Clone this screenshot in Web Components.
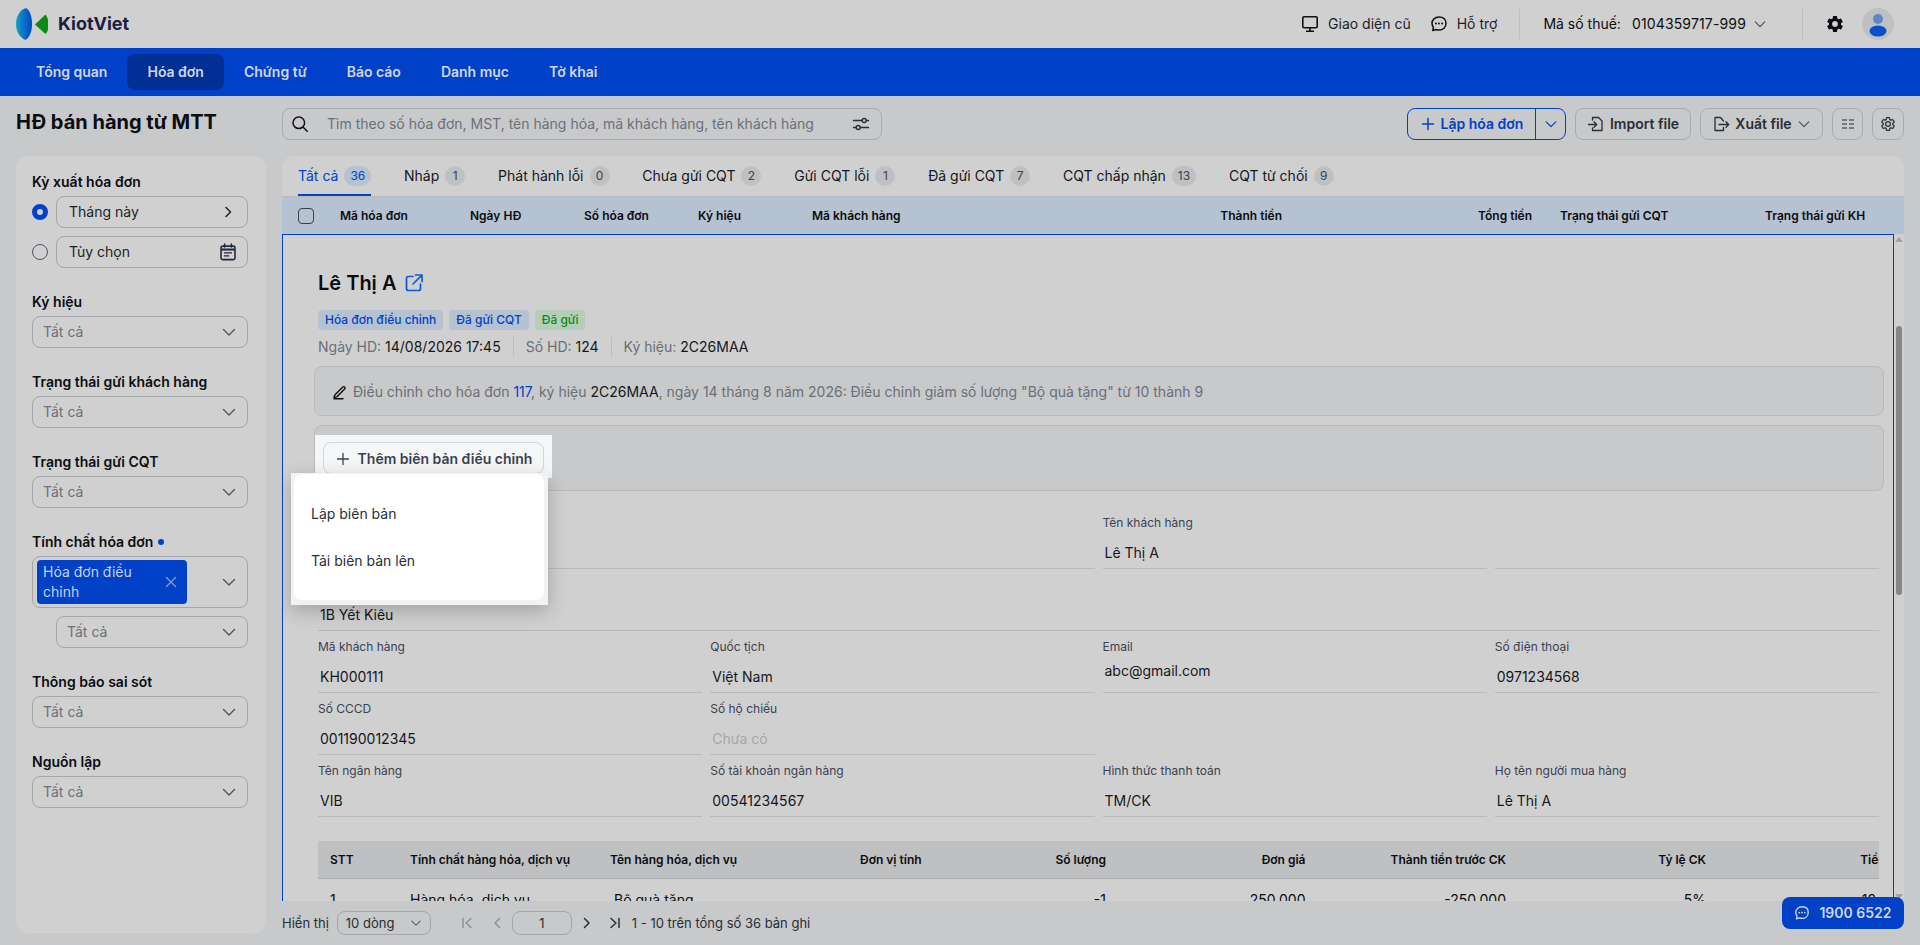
<!DOCTYPE html>
<html lang="vi">
<head>
<meta charset="utf-8">
<title>HĐ bán hàng từ MTT</title>
<style>
	html, body { margin: 0; height: 100%; }
	body {
		width: 1920px;
		height: 945px;
		overflow: hidden;
		display: flex;
		flex-direction: column;
		background: #c8c9cb;
		color: #0c0d10;
		font: 14px/20px Inter, "Noto Sans", sans-serif;
	}
</style>
</head>
<body>
<kv-header></kv-header>
<kv-nav>
	<kv-nav-item>Tổng quan</kv-nav-item>
	<kv-nav-item active>Hóa đơn</kv-nav-item>
	<kv-nav-item>Chứng từ</kv-nav-item>
	<kv-nav-item>Báo cáo</kv-nav-item>
	<kv-nav-item>Danh mục</kv-nav-item>
	<kv-nav-item>Tờ khai</kv-nav-item>
</kv-nav>
<kv-page>
	<kv-toolbar slot="toolbar"></kv-toolbar>
	<kv-sidebar slot="side">
		<kv-filter label="Kỳ xuất hóa đơn">
			<kv-option checked><kv-select dark text="Tháng này" icon="right"></kv-select></kv-option>
			<kv-option><kv-select dark text="Tùy chọn" icon="calendar"></kv-select></kv-option>
		</kv-filter>
		<kv-filter label="Ký hiệu"><kv-select text="Tất cả"></kv-select></kv-filter>
		<kv-filter label="Trạng thái gửi khách hàng"><kv-select text="Tất cả"></kv-select></kv-filter>
		<kv-filter label="Trạng thái gửi CQT"><kv-select text="Tất cả"></kv-select></kv-filter>
		<kv-filter label="Tính chất hóa đơn" dot>
			<kv-select><kv-chip>Hóa đơn điều chỉnh</kv-chip></kv-select>
			<kv-select indent text="Tất cả"></kv-select>
		</kv-filter>
		<kv-filter label="Thông báo sai sót"><kv-select text="Tất cả"></kv-select></kv-filter>
		<kv-filter label="Nguồn lập"><kv-select text="Tất cả"></kv-select></kv-filter>
	</kv-sidebar>
	<kv-panel slot="main">
		<kv-tabs slot="tabs">
			<kv-tab active count="36">Tất cả</kv-tab>
			<kv-tab count="1">Nháp</kv-tab>
			<kv-tab count="0">Phát hành lỗi</kv-tab>
			<kv-tab count="2">Chưa gửi CQT</kv-tab>
			<kv-tab count="1">Gửi CQT lỗi</kv-tab>
			<kv-tab count="7">Đã gửi CQT</kv-tab>
			<kv-tab count="13">CQT chấp nhận</kv-tab>
			<kv-tab count="9">CQT từ chối</kv-tab>
		</kv-tabs>
		<kv-table-head slot="head"></kv-table-head>
		<kv-detail slot="detail"></kv-detail>
	</kv-panel>
	<kv-pager slot="pager"></kv-pager>
</kv-page>
<kv-hotline></kv-hotline>

<script>
	const chevronDown = (size = 16, color = '#4b5563') => `<svg width="${size}" height="${size}" viewBox="0 0 16 16" fill="none" stroke="${color}" stroke-width="1.4" stroke-linecap="round" stroke-linejoin="round"><path d="M2.5 5.5 8 11l5.5-5.5"/></svg>`
	const chevronRight = (color = '#1f2937') => `<svg width="16" height="16" viewBox="0 0 16 16" fill="none" stroke="${color}" stroke-width="1.6" stroke-linecap="round" stroke-linejoin="round"><path d="M5 3.500 9.500 8 5 12.500"/></svg>`
	const calendar = `<svg width="18" height="18" viewBox="0 0 16 16" fill="none" stroke="#1f2937" stroke-width="1.4"><rect x="1.800" y="2.800" width="12.400" height="12" rx="1.500"/><path d="M1.800 5.800h12.400" stroke-width="1.800"/><path d="M5 1v2.500M11 1v2.500" stroke-linecap="round"/><path d="M4.500 8.800h7M4.500 11.500h4.500" stroke-width="1.200"/></svg>`
	const gearPath = 'M19.14 12.94c.04-.3.06-.61.06-.94 0-.32-.02-.64-.07-.94l2.03-1.58c.18-.14.23-.41.12-.61l-1.92-3.32c-.12-.22-.37-.29-.59-.22l-2.39.96c-.5-.38-1.03-.7-1.62-.94l-.36-2.54c-.04-.24-.24-.41-.48-.41h-3.84c-.24 0-.43.17-.47.41l-.36 2.54c-.59.24-1.13.57-1.62.94l-2.39-.96c-.22-.08-.47 0-.59.22L2.74 8.87c-.12.21-.08.47.12.61l2.03 1.58c-.05.3-.09.63-.09.94s.02.64.07.94l-2.03 1.58c-.18.14-.23.41-.12.61l1.92 3.32c.12.22.37.29.59.22l2.39-.96c.5.38 1.03.7 1.62.94l.36 2.54c.05.24.24.41.48.41h3.84c.24 0 .44-.17.47-.41l.36-2.54c.59-.24 1.13-.56 1.62-.94l2.39.96c.22.08.47 0 .59-.22l1.92-3.32c.12-.22.07-.47-.12-.61l-2.01-1.58zM12 15.6c-1.98 0-3.6-1.62-3.6-3.6s1.62-3.6 3.6-3.6 3.6 1.62 3.6 3.6-1.62 3.6-3.6 3.6z'
	const chatBubble = (color, size = 18) => `<svg width="${size}" height="${size}" viewBox="0 0 18 18" fill="none" stroke="${color}" stroke-width="1.500" stroke-linejoin="round"><path d="M9 2C4.900 2 2 4.800 2 8.300c0 1.500.5 2.800 1.400 3.900L2.800 15.600l3.300-1.100c.9.4 1.900.6 2.900.6 4.100 0 7-2.900 7-6.800S13.100 2 9 2Z"/><g fill="${color}" stroke="none"><circle cx="5.900" cy="8.500" r="1"/><circle cx="9" cy="8.500" r="1"/><circle cx="12.100" cy="8.500" r="1"/></g></svg>`

	// every element renders its shadow root once, attributes are read at connect time
	function define(name, css, template) {
		customElements.define(name, class extends HTMLElement {
			connectedCallback() {
				if (this.shadowRoot) return
				this.attachShadow({ mode: 'open' })
				this.shadowRoot.innerHTML = `<style>${css}</style>${template(this)}`
			}
		})
	}

	define('kv-header', `
		:host { display: flex; align-items: center; height: 48px; flex: none; padding: 0 26px 0 16px; box-sizing: border-box; background: #d0d0d0; }
		.logo { display: flex; align-items: center; gap: 10px; font-size: 18px; line-height: 24px; font-weight: 700; color: #1a2140; }
		.links { margin-left: auto; display: flex; align-items: center; color: #1c1f26; }
		.link { display: flex; align-items: center; gap: 9px; }
		.link + .link { margin-left: 19px; }
		.sep { width: 1px; height: 30px; background: #bdbec0; }
		.tax { display: flex; align-items: center; margin: 0 35px 0 23px; }
		.tax b { font-weight: 400; margin-left: 11px; letter-spacing: .15px; }
		.tax svg { margin-left: 7px; }
		.gear { margin: 0 17px 0 22px; display: flex; }
		.avatar { width: 32px; height: 32px; border-radius: 50%; background: #bfc0c2; overflow: hidden; }
	`, () => `
		<div class="logo">
			<svg width="32" height="32" viewBox="0 0 32 32">
				<defs><linearGradient id="lg" x1="0" x2="1" y1="0" y2="0"><stop offset="0" stop-color="#12a0c8"/><stop offset="1" stop-color="#0045c4"/></linearGradient></defs>
				<path fill="url(#lg)" d="M10 0C3.500 2 0 9 0 16c0 7.500 3.800 13.500 9.500 16 3.900-2 6.500-8.500 6.500-16S13.800 2 10 0Z"/>
				<path fill="#0a8c14" d="M19 16.500 29.500 6.500c2.400 3 3.100 6.500 3.100 10s-.7 7-3.100 9.500Z"/>
			</svg>
			KiotViet
		</div>
		<div class="links">
			<div class="link">
				<svg width="18" height="18" viewBox="0 0 18 18" fill="none" stroke="#111" stroke-width="1.600"><rect x="1.800" y="1.800" width="14.400" height="11" rx="1.200"/><path d="M9 13v3M5 16.200h8"/></svg>
				Giao diện cũ
			</div>
			<div class="link">${chatBubble('#111')}Hỗ trợ</div>
		</div>
		<div class="sep" style="margin-left:22px"></div>
		<div class="tax">Mã số thuế:<b>0104359717-999</b>${chevronDown(14)}</div>
		<div class="sep"></div>
		<div class="gear"><svg width="20" height="20" viewBox="0 0 24 24" fill="#0c0d10"><path d="${gearPath}"/></svg></div>
		<div class="avatar"><svg width="32" height="32" viewBox="0 0 32 32"><circle cx="16" cy="11" r="5" fill="#5f86c9"/><ellipse cx="16" cy="23" rx="8.500" ry="5.500" fill="#0a50cc"/></svg></div>
	`)

	define('kv-nav', `
		:host { display: flex; align-items: center; height: 48px; flex: none; padding-left: 16px; background: #0041c7; }
	`, () => `<slot></slot>`)

	define('kv-nav-item', `
		:host { display: flex; align-items: center; height: 36px; padding: 0 20px; border-radius: 8px; color: #cfd5e4; font-weight: 600; }
		:host([active]) { background: #002f96; }
	`, () => `<slot></slot>`)

	define('kv-page', `
		:host { flex: 1; min-height: 0; display: grid; grid-template-columns: 250px 1622px; grid-template-rows: 32px 1fr; column-gap: 16px; row-gap: 16px; padding: 12px 16px 0; }
		h1 { margin: 0; font-size: 20px; line-height: 28px; font-weight: 700; }
		.side { min-height: 0; padding-bottom: 12px; display: flex; }
		.main { min-height: 0; display: flex; flex-direction: column; }
	`, () => `
		<h1>HĐ bán hàng từ MTT</h1>
		<slot name="toolbar"></slot>
		<div class="side"><slot name="side"></slot></div>
		<div class="main"><slot name="main"></slot><slot name="pager"></slot></div>
	`)

	define('kv-toolbar', `
		:host { display: flex; align-items: stretch; gap: 9px; color: #2a2d34; font-weight: 600; }
		.search { width: 600px; box-sizing: border-box; display: flex; align-items: center; gap: 18px; padding: 0 10px 0 8px; margin-right: auto; border: 1px solid #a9aaad; border-radius: 8px; color: #6b7079; font-weight: 400; }
		.search span { flex: 1; }
		.btn { display: flex; align-items: center; justify-content: center; gap: 5px; box-sizing: border-box; border: 1px solid #a9aaad; border-radius: 8px; }
		.create { width: 159px; gap: 0; border-color: #0041c7; color: #0041c7; }
		.create .main { flex: 1; display: flex; align-items: center; justify-content: center; gap: 5px; height: 100%; border-right: 1px solid #0041c7; }
		.create .drop { width: 29px; display: flex; align-items: center; justify-content: center; }
	`, () => `
		<div class="search">
			<svg width="18" height="18" viewBox="0 0 18 18" fill="none" stroke="#111" stroke-width="1.500" stroke-linecap="round"><circle cx="7.800" cy="7.800" r="5.800"/><path d="m12.200 12.200 4 4"/></svg>
			<span>Tìm theo số hóa đơn, MST, tên hàng hóa, mã khách hàng, tên khách hàng</span>
			<svg width="20" height="20" viewBox="0 0 20 20" fill="none" stroke="#2a2d34" stroke-width="1.400" stroke-linecap="round"><path d="M2.500 6.500h8.500M15.500 6.500H17.500M2.500 13.500H5M9.500 13.500h8"/><circle cx="13.200" cy="6.500" r="2"/><circle cx="7.200" cy="13.500" r="2"/></svg>
		</div>
		<div class="btn create">
			<div class="main">
				<svg width="16" height="16" viewBox="0 0 16 16" fill="none" stroke="#0041c7" stroke-width="1.500" stroke-linecap="round"><path d="M8 2.500v11M2.500 8h11"/></svg>
				Lập hóa đơn
			</div>
			<div class="drop">${chevronDown(14, '#0041c7')}</div>
		</div>
		<div class="btn" style="width:116px">
			<svg width="18" height="18" viewBox="0 0 18 18" fill="none" stroke="#2a2d34" stroke-width="1.300" stroke-linecap="round" stroke-linejoin="round"><path d="M5.500 5V2.500h6l3.500 3.500v9.500H5.500V13"/><path d="M1.500 9.500h8M7 6.800l2.700 2.700L7 12.200"/></svg>
			Import file
		</div>
		<div class="btn" style="width:123px">
			<svg width="18" height="18" viewBox="0 0 18 18" fill="none" stroke="#2a2d34" stroke-width="1.300" stroke-linecap="round" stroke-linejoin="round"><path d="M11.500 6 8.500 2.500H3v13h8.500V12.500"/><path d="M7 9.500h9.500M14 6.800l2.700 2.700L14 12.200"/></svg>
			Xuất file ${chevronDown(14)}
		</div>
		<div class="btn" style="width:31px">
			<svg width="14" height="14" viewBox="0 0 14 14" fill="none" stroke="#2a2d34" stroke-width="1.200"><path d="M1 3h5M8 3h5M1 7h5M8 7h5M1 11h5M8 11h5"/></svg>
		</div>
		<div class="btn" style="width:32px">
			<svg width="16" height="16" viewBox="0 0 24 24" fill="none" stroke="#2a2d34" stroke-width="1.800"><path d="${gearPath}"/></svg>
		</div>
	`)

	define('kv-sidebar', `
		:host { display: flex; flex-direction: column; gap: 24px; flex: 1; box-sizing: border-box; padding: 16px 18px 16px 16px; background: #d0d0d0; border-radius: 12px; }
	`, () => `<slot></slot>`)

	define('kv-filter', `
		:host { display: flex; flex-direction: column; gap: 8px; }
		.label { font-weight: 600; margin-bottom: -4px; color: #0c0d10; display: flex; align-items: center; gap: 5px; }
		.dot { width: 6px; height: 6px; border-radius: 50%; background: #0041c7; }
	`, el => `
		<div class="label">${el.getAttribute('label')}${el.hasAttribute('dot') ? '<span class="dot"></span>' : ''}</div>
		<slot></slot>
	`)

	define('kv-option', `
		:host { display: flex; align-items: center; gap: 8px; }
		.radio { width: 16px; height: 16px; flex: none; box-sizing: border-box; border-radius: 50%; border: 1px solid #4b5563; }
		:host([checked]) .radio { border: 5px solid #0041c7; background: #d0d0d0; }
		::slotted(kv-select) { flex: 1; }
	`, () => `<span class="radio"></span><slot></slot>`)

	define('kv-select', `
		:host { display: flex; align-items: center; box-sizing: border-box; min-height: 32px; padding: 3px 10px 3px 4px; border: 1px solid #a5a6a9; border-radius: 8px; color: #6b7079; }
		:host([dark]) { color: #1c1f26; padding-left: 12px; }
		:host([indent]) { margin-left: 24px; }
		.text { flex: 1; padding-left: 6px; }
		:host([dark]) .text { padding-left: 0; }
		.text:empty { display: none; }
		slot { display: block; flex: 1; }
		.icon { display: flex; margin-left: auto; }
	`, el => {
		const icon = el.getAttribute('icon')
		const glyph = icon === 'right' ? chevronRight() : icon === 'calendar' ? calendar : chevronDown()
		return `<div class="text">${el.getAttribute('text') || ''}</div><slot></slot><div class="icon">${glyph}</div>`
	})

	define('kv-chip', `
		:host { display: flex; align-items: center; width: 150px; box-sizing: border-box; padding: 2px 10px 2px 6px; background: #0041c7; border-radius: 4px; color: #c5d1ea; }
		span { width: 108px; }
		svg { margin-left: auto; }
	`, () => `<span><slot></slot></span><svg width="12" height="12" viewBox="0 0 12 12" fill="none" stroke="#7f9fdc" stroke-width="1.300" stroke-linecap="round"><path d="m1.500 1.500 9 9M10.500 1.500l-9 9"/></svg>`)

	define('kv-panel', `
		:host { flex: 1; min-height: 0; display: flex; flex-direction: column; background: #d0d0d0; border-radius: 12px 12px 0 0; overflow: hidden; }
		.body { flex: 1; min-height: 0; display: flex; }
		.track { width: 10px; flex: none; display: flex; flex-direction: column; align-items: center; }
		.up, .down { width: 0; height: 0; border-left: 4px solid transparent; border-right: 4px solid transparent; }
		.up { border-bottom: 5px solid #a0a1a3; margin-top: 3px; }
		.down { border-top: 5px solid #a0a1a3; margin-top: auto; margin-bottom: 2px; }
		.thumb { width: 6px; height: 269px; margin-top: 84px; background: #858688; border-radius: 3px; }
	`, () => `
		<slot name="tabs"></slot>
		<slot name="head"></slot>
		<div class="body">
			<slot name="detail"></slot>
			<div class="track"><span class="up"></span><span class="thumb"></span><span class="down"></span></div>
		</div>
	`)

	define('kv-tabs', `
		:host { display: flex; gap: 32.8px; height: 41px; box-sizing: border-box; padding-left: 16px; border-bottom: 1px solid #b9babc; flex: none; }
	`, () => `<slot></slot>`)

	define('kv-tab', `
		:host { display: flex; align-items: center; gap: 6px; height: 40px; box-sizing: border-box; color: #15171c; }
		:host([active]) { color: #0041c7; border-bottom: 2px solid #0041c7; padding-top: 2px; }
		.count { min-width: 20px; height: 20px; box-sizing: border-box; padding: 0 6px; border-radius: 10px; background: #bfc0c2; color: #3b3f46; font-size: 12px; line-height: 20px; text-align: center; }
		:host([active]) .count { background: #b5c2d1; color: #0041c7; }
	`, el => `<slot></slot><span class="count">${el.getAttribute('count')}</span>`)

	define('kv-table-head', `
		:host { display: grid; grid-template-columns: 58px 130px 114px 114px 114px 288px 182px 250px 233px 139px; align-items: center; height: 37px; flex: none; background: #b5c2d1; font-size: 12px; font-weight: 600; color: #0c0d10; }
		.check { padding-left: 16px; display: flex; }
		.check i { width: 16px; height: 16px; box-sizing: border-box; border: 1px solid #3b3f46; border-radius: 4px; }
		.end { text-align: right; }
		.pad { padding-left: 28px; }
	`, () => `
		<div class="check"><i></i></div>
		<div>Mã hóa đơn</div><div>Ngày HĐ</div><div>Số hóa đơn</div><div>Ký hiệu</div><div>Mã khách hàng</div>
		<div class="end">Thành tiền</div><div class="end">Tổng tiền</div>
		<div class="pad">Trạng thái gửi CQT</div><div>Trạng thái gửi KH</div>
	`)

	define('kv-detail', `
		:host { display: block; flex: 1; min-width: 0; overflow: hidden; border: 1px solid #0041c7; border-bottom: 0; box-sizing: border-box; padding: 34px 9px 0 31px; position: relative; }
		.title { display: flex; align-items: center; gap: 8px; margin-left: 4px; font-size: 20px; line-height: 28px; font-weight: 600; }
		.tags { display: flex; gap: 6px; margin: 13px 0 0 4px; }
		.tag { height: 20px; padding: 0 7px; border-radius: 4px; background: #b5c2d1; color: #0041c7; font-size: 12px; font-weight: 500; }
		.tag.ok { background: #b5ceb9; color: #0a8c14; }
		.meta { display: flex; margin: 7px 0 0 4px; color: #6a6f77; }
		.meta b { font-weight: 400; color: #15171c; }
		.meta span + span { margin-left: 12px; padding-left: 12px; border-left: 1px solid #bdbec0; }
		.box { box-sizing: border-box; margin-top: 9px; background: #c8c9cb; border: 1px solid #b9babc; border-radius: 8px; }
		.note { height: 50px; display: flex; align-items: center; gap: 5px; padding: 2px 17px 0; color: #6a6f77; }
		.note b { font-weight: 400; color: #15171c; }
		.note a { color: #0041c7; }
		.adjust { height: 66px; padding-top: 9px; position: relative; }
		.spot { width: 237px; height: 43px; box-sizing: border-box; padding: 7px 8px 4px; background: #f5f6f8; }
		.add { display: flex; align-items: center; justify-content: center; gap: 7px; height: 32px; box-sizing: border-box; padding-top: 1px; border: 1px solid #d3d5da; border-radius: 8px; font-weight: 600; color: #3b4250; }
		.grid { display: grid; grid-template-columns: repeat(4, 1fr); column-gap: 8px; margin: 16px 5px 0 4px; }
		.wide2 { grid-column: span 2; }
		.wide4 { grid-column: span 4; }
		.items { margin: 24px 5px 0 4px; overflow: hidden; }
		.row { display: grid; grid-template-columns: 92px 200px 250px 100px 146px 199.5px 200.5px 200px 200px; width: 1588px; align-items: center; }
		.row.top { height: 37px; background: #bfc0c2; border-bottom: 1px solid #adaeb0; font-size: 12px; font-weight: 600; }
		.row.line { padding-top: 11px; }
		.row .first { padding-left: 12px; }
		.row .end { text-align: right; }
		.row .in { padding-left: 4px; }
	`, () => `
		<div class="title">Lê Thị A
			<svg width="20" height="20" viewBox="0 0 20 20" fill="none" stroke="#0d5ad6" stroke-width="1.700" stroke-linecap="round" stroke-linejoin="round"><path d="M9 3.500H4.500a2 2 0 0 0-2 2v10a2 2 0 0 0 2 2h10a2 2 0 0 0 2-2V11"/><path d="M11.500 2h6.500v6.500M18 2l-9 9"/></svg>
		</div>
		<div class="tags">
			<span class="tag">Hóa đơn điều chỉnh</span>
			<span class="tag">Đã gửi CQT</span>
			<span class="tag ok">Đã gửi</span>
		</div>
		<div class="meta">
			<span>Ngày HD: <b>14/08/2026 17:45</b></span>
			<span>Số HD: <b>124</b></span>
			<span>Ký hiệu: <b>2C26MAA</b></span>
		</div>
		<div class="box note">
			<svg width="16" height="16" viewBox="0 0 16 16" fill="none" stroke="#111" stroke-width="1.400" stroke-linecap="round" stroke-linejoin="round"><path d="M2.800 11 10.800 3a1.300 1.300 0 0 1 1.900 1.900l-8 8L2 13.500ZM2 14.800h9"/></svg>
			<div>Điều chỉnh cho hóa đơn <a>117</a>, ký hiệu <b>2C26MAA</b>, ngày 14 tháng 8 năm 2026: Điều chỉnh giảm số lượng "Bộ quà tặng" từ 10 thành 9</div>
		</div>
		<div class="box adjust">
			<div class="spot"><div class="add">
				<svg width="16" height="16" viewBox="0 0 16 16" fill="none" stroke="#3b4250" stroke-width="1.300" stroke-linecap="round"><path d="M8 2.500v11M2.500 8h11"/></svg>
				Thêm biên bản điều chỉnh
			</div></div>
			<kv-popup>
				<kv-menu-item>Lập biên bản</kv-menu-item>
				<kv-menu-item>Tải biên bản lên</kv-menu-item>
			</kv-popup>
		</div>
		<div class="grid">
			<kv-info class="wide2"></kv-info>
			<kv-info label="Tên khách hàng" value="Lê Thị A"></kv-info>
			<kv-info></kv-info>
			<kv-info class="wide4" value="1B Yết Kiêu"></kv-info>
			<kv-info label="Mã khách hàng" value="KH000111"></kv-info>
			<kv-info label="Quốc tịch" value="Việt Nam"></kv-info>
			<kv-info label="Email" value="abc@gmail.com" raised></kv-info>
			<kv-info label="Số điện thoại" value="0971234568"></kv-info>
			<kv-info label="Số CCCD" value="001190012345"></kv-info>
			<kv-info label="Số hộ chiếu" value="Chưa có" muted></kv-info>
			<kv-info blank></kv-info>
			<kv-info blank></kv-info>
			<kv-info label="Tên ngân hàng" value="VIB"></kv-info>
			<kv-info label="Số tài khoản ngân hàng" value="00541234567"></kv-info>
			<kv-info label="Hình thức thanh toán" value="TM/CK"></kv-info>
			<kv-info label="Họ tên người mua hàng" value="Lê Thị A"></kv-info>
		</div>
		<div class="items">
			<div class="row top">
				<div class="first">STT</div><div>Tính chất hàng hóa, dịch vụ</div><div>Tên hàng hóa, dịch vụ</div><div>Đơn vị tính</div>
				<div class="end">Số lượng</div><div class="end">Đơn giá</div><div class="end">Thành tiền trước CK</div><div class="end">Tỷ lệ CK</div><div class="end">Tiền CK</div>
			</div>
			<div class="row line">
				<div class="first">1</div><div>Hàng hóa, dịch vụ</div><div class="in">Bộ quà tặng</div><div></div>
				<div class="end">-1</div><div class="end">250.000</div><div class="end">-250.000</div><div class="end">5%</div><div class="end">-12.500</div>
			</div>
		</div>
	`)

	define('kv-info', `
		:host { display: block; height: 62px; box-sizing: border-box; padding-top: 8px; border-bottom: 1px solid #b9babc; }
		:host([blank]) { border-bottom: 0; }
		.label { height: 16px; font-size: 12px; line-height: 16px; color: #3b4250; }
		.value { margin-top: 12px; padding-left: 2px; color: #15171c; }
		:host([raised]) .value { margin-top: 6px; }
		:host([muted]) .value { color: #a5a7ab; }
	`, el => `<div class="label">${el.getAttribute('label') || ''}</div><div class="value">${el.getAttribute('value') || ''}</div>`)

	define('kv-popup', `
		:host { position: absolute; left: -24px; top: 47px; z-index: 2; width: 257px; height: 132px; box-sizing: border-box; padding: 1px 4px 5px 3px; background: #f1f2f3; box-shadow: 0 6px 18px rgba(0,0,0,.22); }
		.menu { height: 100%; box-sizing: border-box; padding: 16px 0; background: #fff; border-radius: 8px; }
	`, () => `<div class="menu"><slot></slot></div>`)

	define('kv-menu-item', `
		:host { display: flex; align-items: center; height: 47px; padding-left: 17px; color: #2a2f3a; }
	`, () => `<slot></slot>`)

	define('kv-pager', `
		:host { display: flex; align-items: center; height: 44px; flex: none; font-size: 13px; color: #2a2d34; }
		.size { width: 94px; height: 24px; box-sizing: border-box; margin-left: 8px; padding: 0 8px; display: flex; align-items: center; justify-content: space-between; border: 1px solid #a5a6a9; border-radius: 8px; }
		.page { width: 60px; height: 24px; box-sizing: border-box; border: 1px solid #a5a6a9; border-radius: 8px; text-align: center; line-height: 22px; }
		.nav { display: flex; align-items: center; gap: 8px; margin-left: 29px; }
		.nav svg { display: block; }
		.sum { margin-left: 10px; }
	`, () => `
		<span>Hiển thị</span>
		<div class="size">10 dòng ${chevronDown(12)}</div>
		<div class="nav">
			<svg width="14" height="14" viewBox="0 0 14 14" fill="none" stroke="#8f9196" stroke-width="1.500" stroke-linecap="round" stroke-linejoin="round"><path d="M3 2.500v9M11 2.500 6 7l5 4.500"/></svg>
			<svg style="margin-left:8px" width="14" height="14" viewBox="0 0 14 14" fill="none" stroke="#8f9196" stroke-width="1.500" stroke-linecap="round" stroke-linejoin="round"><path d="M9.500 2.500 5 7l4.500 4.500"/></svg>
			<div class="page">1</div>
			<svg width="14" height="14" viewBox="0 0 14 14" fill="none" stroke="#2a2d34" stroke-width="1.500" stroke-linecap="round" stroke-linejoin="round"><path d="M4.500 2.500 9 7l-4.500 4.500"/></svg>
			<svg style="margin-left:6px" width="14" height="14" viewBox="0 0 14 14" fill="none" stroke="#2a2d34" stroke-width="1.500" stroke-linecap="round" stroke-linejoin="round"><path d="M3 2.500 8 7l-5 4.500M11 2.500v9"/></svg>
		</div>
		<span class="sum">1 - 10 trên tổng số 36 bản ghi</span>
	`)

	define('kv-hotline', `
		:host { position: fixed; right: 16px; bottom: 16px; z-index: 5; display: flex; align-items: center; justify-content: center; gap: 9px; width: 122px; height: 32px; background: #0041c7; border-radius: 8px; color: #d0d6e6; font-weight: 600; }
	`, () => `${chatBubble('#d0d6e6', 16)}1900 6522`)
</script>
</body>
</html>
